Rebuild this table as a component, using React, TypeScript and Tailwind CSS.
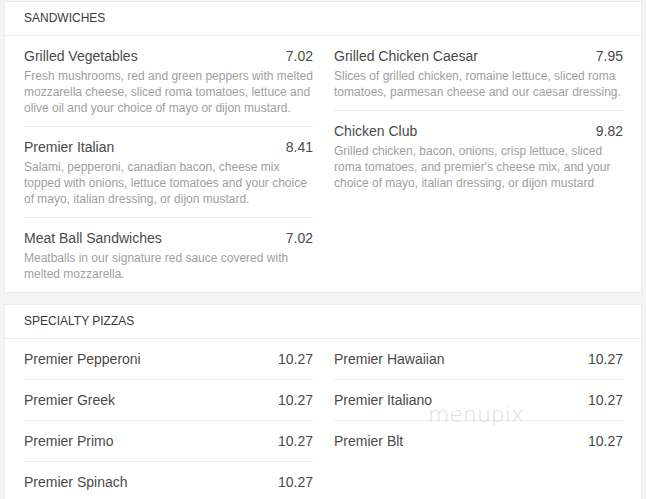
import React from 'react';

type Item = { name: string; price: string; desc?: string };

const sandwichesLeft: Item[] = [
  {
    name: 'Grilled Vegetables',
    price: '7.02',
    desc: 'Fresh mushrooms, red and green peppers with melted mozzarella cheese, sliced roma tomatoes, lettuce and olive oil and your choice of mayo or dijon mustard.',
  },
  {
    name: 'Premier Italian',
    price: '8.41',
    desc: 'Salami, pepperoni, canadian bacon, cheese mix topped with onions, lettuce tomatoes and your choice of mayo, italian dressing, or dijon mustard.',
  },
  {
    name: 'Meat Ball Sandwiches',
    price: '7.02',
    desc: 'Meatballs in our signature red sauce covered with melted mozzarella.',
  },
];

const sandwichesRight: Item[] = [
  {
    name: 'Grilled Chicken Caesar',
    price: '7.95',
    desc: 'Slices of grilled chicken, romaine lettuce, sliced roma tomatoes, parmesan cheese and our caesar dressing.',
  },
  {
    name: 'Chicken Club',
    price: '9.82',
    desc: "Grilled chicken, bacon, onions, crisp lettuce, sliced roma tomatoes, and premier's cheese mix, and your choice of mayo, italian dressing, or dijon mustard",
  },
];

const pizzasLeft: Item[] = [
  { name: 'Premier Pepperoni', price: '10.27' },
  { name: 'Premier Greek', price: '10.27' },
  { name: 'Premier Primo', price: '10.27' },
  { name: 'Premier Spinach', price: '10.27' },
];

const pizzasRight: Item[] = [
  { name: 'Premier Hawaiian', price: '10.27' },
  { name: 'Premier Italiano', price: '10.27' },
  { name: 'Premier Blt', price: '10.27' },
];

const MenuItem: React.FC<{ item: Item }> = ({ item }) => (
  <div className="py-[10px] border-b border-[#ececec] last:border-b-0">
    <div className="flex justify-between text-[14px] leading-[20px] text-[#4a4a4a]">
      <span>{item.name}</span>
      <span>{item.price}</span>
    </div>
    {item.desc && (
      <p className="mt-[2px] text-[12px] leading-[16px] text-[#a0a0a0]">{item.desc}</p>
    )}
  </div>
);

const Section: React.FC<{ title: string; left: Item[]; right: Item[] }> = ({ title, left, right }) => (
  <div className="bg-white border border-[#ececec]">
    <div className="px-[19px] py-[9px] text-[12px] leading-[15px] text-[#3a3a3a] border-b border-[#ececec]">
      {title}
    </div>
    <div className="grid grid-cols-2 gap-x-[21px] pl-[19px] pr-[18px]">
      <div>
        {left.map((it) => (
          <MenuItem key={it.name} item={it} />
        ))}
      </div>
      <div>
        {right.map((it) => (
          <MenuItem key={it.name} item={it} />
        ))}
      </div>
    </div>
  </div>
);

export default function App() {
  return (
    <div
      className="relative min-h-[499px] bg-[#f4f4f4] px-[4px] pt-[1px] flex flex-col gap-[11px] overflow-hidden"
      style={{ fontFamily: '"Liberation Sans", Arial, sans-serif' }}
    >
      <Section title="SANDWICHES" left={sandwichesLeft} right={sandwichesRight} />
      <Section title="SPECIALTY PIZZAS" left={pizzasLeft} right={pizzasRight} />

      {/* watermark */}
      <div
        className="absolute left-[428px] top-[404px] text-[22px] leading-[22px] text-[#dedede] pointer-events-none select-none"
        style={{ fontFamily: '"DejaVu Sans", sans-serif', fontWeight: 200 }}
      >
        menupix
      </div>
    </div>
  );
}
